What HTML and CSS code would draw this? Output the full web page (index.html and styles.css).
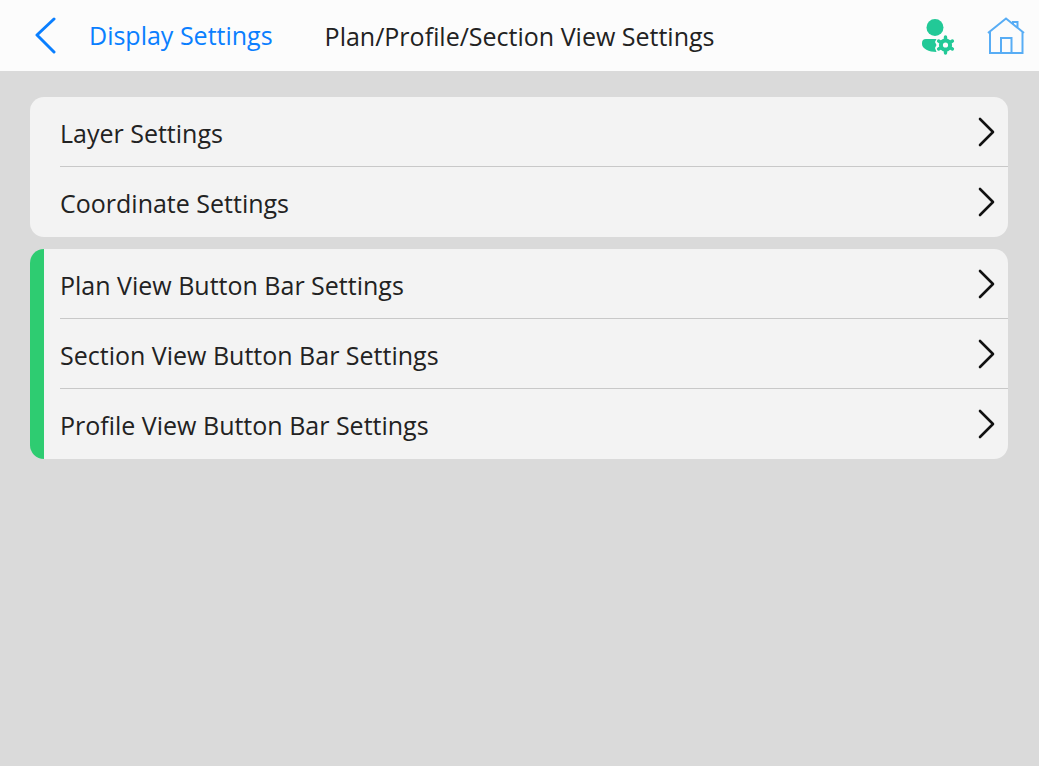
FILE: index.html
```html
<!DOCTYPE html>
<html lang="en">
<head>
<meta charset="utf-8">
<meta name="viewport" content="width=device-width, initial-scale=1">
<title>Plan/Profile/Section View Settings</title>
<link rel="stylesheet" href="styles.css">
</head>
<body>
<header class="topbar">
  <a class="back" href="#">
    <svg class="back-icon" viewBox="0 0 22 38" aria-hidden="true"><path d="M20 2 3 18 20 35"/></svg>
    <span>Display Settings</span>
  </a>
  <h1 class="title">Plan/Profile/Section View Settings</h1>
  <div class="actions">
    <button class="icon-button" type="button" aria-label="User settings">
      <svg class="user-icon" viewBox="0 0 34 38" aria-hidden="true">
        <circle cx="14" cy="10.500" r="8.500"/>
        <path d="M5 22h10.500l-1.500 3 1.500 3-1.500 3 1.500 4C8 35 1 31.500 1 27v-1a4 4 0 0 1 4-4z"/>
        <circle class="gear-ring" cx="24.500" cy="28" r="4.600"/>
        <path class="gear-teeth" d="M24.500 22.500v-2.500M24.500 33.500v2.500M29.300 25.200l2.100-1.200M19.700 30.800l-2.100 1.200M29.300 30.800l2.100 1.200M19.700 25.200l-2.100-1.200"/>
      </svg>
    </button>
    <button class="icon-button" type="button" aria-label="Home">
      <svg class="home-icon" viewBox="0 0 38 38" aria-hidden="true"><path d="M1 16 19 1.500 37 16M3 14.500V36h32.500V14.500M14 36V21h10.500V36M26 7V5h4.500v5.500"/></svg>
    </button>
  </div>
</header>
<main class="content">
  <nav class="group" aria-label="View settings">
    <a class="row" href="#"><span>Layer Settings</span><svg class="chevron" viewBox="0 0 18 30" aria-hidden="true"><path d="M3 2 16 15 3 28"/></svg></a>
    <a class="row" href="#"><span>Coordinate Settings</span><svg class="chevron" viewBox="0 0 18 30" aria-hidden="true"><path d="M3 2 16 15 3 28"/></svg></a>
  </nav>
  <nav class="group group-marked" aria-label="Button bar settings">
    <a class="row" href="#"><span>Plan View Button Bar Settings</span><svg class="chevron" viewBox="0 0 18 30" aria-hidden="true"><path d="M3 2 16 15 3 28"/></svg></a>
    <a class="row" href="#"><span>Section View Button Bar Settings</span><svg class="chevron" viewBox="0 0 18 30" aria-hidden="true"><path d="M3 2 16 15 3 28"/></svg></a>
    <a class="row" href="#"><span>Profile View Button Bar Settings</span><svg class="chevron" viewBox="0 0 18 30" aria-hidden="true"><path d="M3 2 16 15 3 28"/></svg></a>
  </nav>
</main>
</body>
</html>
```
FILE: styles.css
```css
* {
  box-sizing: border-box;
}

body {
  margin: 0;
  min-height: 100vh;
  background: #dadada;
  color: #222;
  font-family: "Segoe UI", "Open Sans", sans-serif;
  font-size: 25px;
  line-height: 32px;
}

a {
  color: inherit;
  text-decoration: none;
}

svg {
  display: block;
  flex: none;
}

.topbar {
  display: flex;
  align-items: center;
  min-height: 71px;
  padding: 0 14px 0 34px;
  background: #fcfcfc;
}

.back {
  display: flex;
  align-items: center;
  gap: 33px;
  color: #0a7fff;
}

.back span {
  padding-bottom: 2px;
}

.back-icon {
  width: 22px;
  height: 38px;
  fill: none;
  stroke: currentColor;
  stroke-width: 3;
  stroke-linecap: round;
  stroke-linejoin: round;
}

.title {
  margin: 0 0 0 52px;
  font-size: 25px;
  font-weight: 400;
}

.actions {
  display: flex;
  align-items: center;
  gap: 32px;
  margin-left: auto;
}

.icon-button {
  padding: 0;
  border: 0;
  background: none;
  cursor: pointer;
}

.user-icon {
  width: 34px;
  height: 38px;
  fill: #22c997;
}

.gear-ring {
  fill: #fcfcfc;
  stroke: #22c997;
  stroke-width: 4;
}

.gear-teeth {
  stroke: #22c997;
  stroke-width: 3.4;
  stroke-linecap: round;
}

.home-icon {
  width: 38px;
  height: 38px;
  fill: none;
  stroke: #58adf5;
  stroke-width: 2;
}

.content {
  display: flex;
  flex-direction: column;
  gap: 12px;
  padding: 26px 31px 26px 30px;
}

.group {
  overflow: hidden;
  padding-left: 30px;
  border-radius: 14px;
  background: #f3f3f3;
}

.group-marked {
  padding-left: 16px;
  border-left: 14px solid #2ecc71;
}

.row {
  display: flex;
  align-items: center;
  justify-content: space-between;
  height: 70px;
  padding: 2px 13px 0 0;
  border-bottom: 1px solid #c8c8c8;
}

.row:last-child {
  border-bottom-color: transparent;
}

.chevron {
  width: 18px;
  height: 30px;
  margin-bottom: 2px;
  fill: none;
  stroke: #111;
  stroke-width: 2.6;
  stroke-linecap: round;
  stroke-linejoin: round;
}
```
